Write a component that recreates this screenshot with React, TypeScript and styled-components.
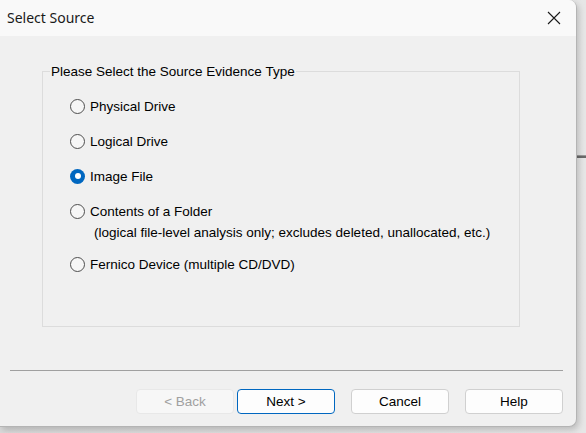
import React, { useState } from 'react';
import styled, { createGlobalStyle } from 'styled-components';

const GlobalStyle = createGlobalStyle`
  html, body {
    margin: 0;
    padding: 0;
    background: #e2e2e2;
  }
  * {
    box-sizing: border-box;
  }
`;

const Desktop = styled.div`
  position: relative;
  width: 586px;
  height: 433px;
  overflow: hidden;
  background: linear-gradient(90deg, #dadada, #e6e6e6);
`;

const BackdropLine = styled.div`
  position: absolute;
  left: 576px;
  top: 155px;
  width: 12px;
  height: 3px;
  background: #6a6a6a;
  border-top: 1px solid #9a9a9a;
`;

const Window = styled.div`
  position: relative;
  width: 577px;
  height: 427px;
  display: flex;
  flex-direction: column;
  background: #f0f0f0;
  border-radius: 0 8px 8px 0;
  border-right: 1px solid #b4b4b4;
  border-bottom: 1px solid #b4b4b4;
  box-shadow: 2px 3px 6px rgba(0, 0, 0, 0.18);
  overflow: hidden;
  font-family: "Liberation Sans", Arial, sans-serif;
  font-size: 13.5px;
  color: #000;
`;

const TitleBar = styled.div`
  height: 36px;
  flex: none;
  display: flex;
  align-items: center;
  justify-content: space-between;
  padding: 0 14px 0 7px;
  background: #f9f9f9;
`;

const Title = styled.div`
  font-family: "Noto Sans", "Open Sans", sans-serif;
  font-size: 14px;
  color: #1a1a1a;
  margin-top: -2px;
`;

const CloseButton = styled.div`
  width: 16px;
  height: 16px;
  display: flex;
  align-items: center;
  justify-content: center;
  margin-top: -1px;
`;

const Body = styled.div`
  flex: 1;
  display: flex;
  flex-direction: column;
  padding: 28px 0 0 42px;
`;

const GroupBox = styled.fieldset`
  margin: 0;
  width: 478px;
  height: 263px;
  border: 1px solid #dcdcdc;
  padding: 17px 0 0 27px;
  display: flex;
  flex-direction: column;
  gap: 15px;
`;

const Legend = styled.legend`
  padding: 0 1px;
  margin-left: -20px;
  line-height: 15px;
  color: #000;
`;

const Option = styled.div`
  display: flex;
  flex-direction: column;
`;

const OptionRow = styled.label`
  display: flex;
  align-items: center;
  gap: 5px;
  height: 20px;
  cursor: default;
`;

const RadioCircle = styled.span<{ $checked: boolean }>`
  width: 15px;
  height: 15px;
  flex: none;
  border-radius: 50%;
  display: flex;
  align-items: center;
  justify-content: center;
  border: ${p => (p.$checked ? 'none' : '1px solid #4e4e4e')};
  background: ${p => (p.$checked ? '#0067c0' : '#f6f6f6')};

  &::after {
    content: '';
    display: ${p => (p.$checked ? 'block' : 'none')};
    width: 6px;
    height: 6px;
    border-radius: 50%;
    background: #fff;
  }
`;

const Note = styled.div`
  margin: 4px 0 -2px 24px;
  line-height: 16px;
`;

const Footer = styled.div`
  flex: none;
  display: flex;
  flex-direction: column;
  padding: 0 13px 12px 10px;
`;

const Separator = styled.div`
  height: 1px;
  background: #a0a0a0;
  margin-bottom: 18px;
`;

const ButtonRow = styled.div`
  display: flex;
  justify-content: flex-end;
  gap: 3px;
`;

const Button = styled.button<{ $focused?: boolean; $spaced?: boolean }>`
  width: 98px;
  height: 25px;
  margin-left: ${p => (p.$spaced ? '13px' : '0')};
  border-radius: 4px;
  border: 1px solid ${p => (p.$focused ? '#0067c0' : '#d0d0d0')};
  background: #fdfdfd;
  font-family: "Liberation Sans", Arial, sans-serif;
  font-size: 13.5px;
  color: #000;
  padding: 0;

  &:disabled {
    background: #f7f7f7;
    border-color: #e8e8e8;
    color: #a0a0a0;
  }
`;

const options = [
  { id: 'physical', label: 'Physical Drive' },
  { id: 'logical', label: 'Logical Drive' },
  { id: 'image', label: 'Image File' },
  {
    id: 'folder',
    label: 'Contents of a Folder',
    note: '(logical file-level analysis only; excludes deleted, unallocated, etc.)',
  },
  { id: 'fernico', label: 'Fernico Device (multiple CD/DVD)' },
];

export default function App() {
  const [selected, setSelected] = useState('image');

  return (
    <>
      <GlobalStyle />
      <Desktop>
        <BackdropLine />
        <Window>
          <TitleBar>
            <Title>Select Source</Title>
            <CloseButton>
              <svg width="14" height="14" viewBox="0 0 14 14">
                <path d="M1 1 L13 13 M13 1 L1 13" stroke="#1a1a1a" strokeWidth="1.1" fill="none" />
              </svg>
            </CloseButton>
          </TitleBar>
          <Body>
            <GroupBox>
              <Legend>Please Select the Source Evidence Type</Legend>
              {options.map(o => (
                <Option key={o.id}>
                  <OptionRow onClick={() => setSelected(o.id)}>
                    <RadioCircle $checked={selected === o.id} />
                    {o.label}
                  </OptionRow>
                  {o.note && <Note>{o.note}</Note>}
                </Option>
              ))}
            </GroupBox>
          </Body>
          <Footer>
            <Separator />
            <ButtonRow>
              <Button disabled>&lt; Back</Button>
              <Button $focused>Next &gt;</Button>
              <Button $spaced>Cancel</Button>
              <Button $spaced>Help</Button>
            </ButtonRow>
          </Footer>
        </Window>
      </Desktop>
    </>
  );
}
